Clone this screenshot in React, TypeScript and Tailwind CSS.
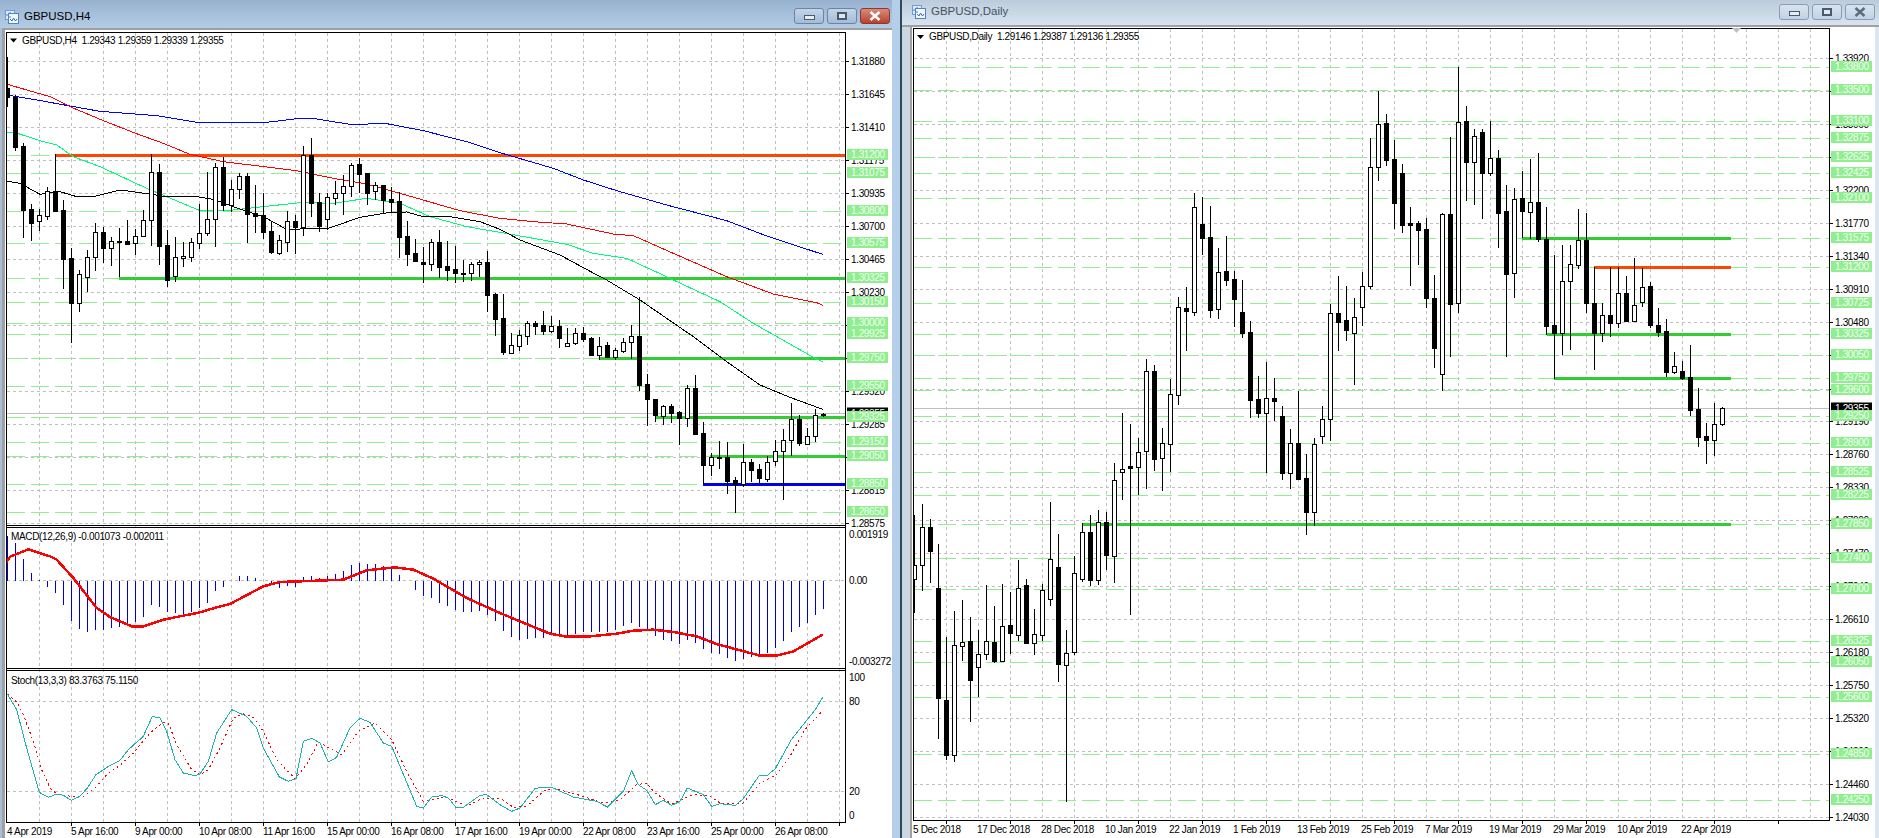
const FONT = '"Liberation Sans", Arial, sans-serif';

// chart data is read off the screenshot in thirds of a pixel
const pts = (s: string, dx = 0, dy = 0) =>
  s
    .split(' ')
    .map((p) => {
      const [x, y] = p.split(',').map(Number);
      return `${(x + dx) / 3},${(y + dy) / 3}`;
    })
    .join(' ');

type Candle = number[]; // hi, bodyTop, bodyBottom, lo, bull

const h4A: Candle[] = [
  [170, 265, 290, 320, 0], [285, 290, 440, 452, 0], [430, 438, 630, 714, 0], [612, 627, 668, 722, 0],
  [627, 646, 664, 693, 1], [560, 574, 647, 660, 1], [462, 574, 632, 632, 0], [600, 630, 776, 866, 0],
  [745, 775, 910, 1028, 0], [810, 822, 910, 935, 1], [750, 772, 830, 875, 1], [670, 697, 772, 812, 1],
  [680, 697, 743, 790, 0], [712, 724, 745, 797, 1], [684, 723, 725, 830, 0], [660, 724, 732, 735, 0],
  [688, 709, 730, 765, 1], [630, 661, 709, 709, 1], [462, 517, 661, 737, 1], [492, 517, 737, 795, 0],
  [690, 736, 840, 860, 0], [712, 770, 827, 846, 1], [727, 769, 775, 800, 1], [713, 727, 770, 785, 1],
  [612, 700, 730, 748, 1], [517, 658, 700, 708, 1], [488, 502, 658, 742, 1], [470, 502, 614, 632, 0],
  [540, 568, 614, 635, 1], [518, 529, 568, 598, 1], [518, 529, 643, 730, 0], [555, 640, 647, 700, 0],
  [578, 646, 695, 716, 0], [665, 694, 755, 763, 0], [705, 721, 758, 765, 1], [633, 664, 725, 755, 1],
  [645, 663, 680, 762, 0], [438, 466, 680, 708, 1], [414, 466, 608, 650, 0], [580, 607, 678, 695, 0],
  [578, 592, 656, 690, 1], [543, 580, 593, 614, 1], [526, 559, 580, 644, 1], [490, 496, 559, 590, 1],
  [475, 492, 521, 580, 0], [519, 520, 578, 614, 0], [547, 556, 574, 600, 1], [556, 556, 600, 640, 0],
  [560, 597, 605, 640, 0], [575, 603, 710, 775, 0], [663, 709, 761, 797, 0], [717, 759, 782, 786, 0],
  [740, 787, 793, 850, 0], [717, 727, 793, 812, 1], [690, 726, 800, 835, 0], [722, 799, 809, 842, 0],
  [738, 808, 820, 850, 0], [780, 820, 821, 845, 0], [787, 793, 820, 842, 1], [780, 787, 793, 830, 1],
  [752, 787, 884, 936, 0], [880, 882, 957, 1008, 0],
];

// second half of the H4 chart, y measured from y=280
const h4B: Candle[] = [
  [42, 114, 215, 225, 0], [160, 196, 218, 220, 1], [150, 166, 197, 213, 1], [124, 130, 167, 195, 1],
  [123, 130, 137, 165, 0], [94, 135, 153, 165, 0], [108, 139, 153, 160, 1], [120, 139, 173, 204, 0],
  [145, 188, 197, 200, 1], [145, 160, 188, 194, 1], [141, 160, 176, 185, 0], [172, 175, 225, 228, 0],
  [172, 199, 224, 240, 1], [187, 196, 230, 232, 0], [205, 211, 230, 240, 1], [175, 187, 212, 218, 1],
  [135, 169, 187, 237, 1], [52, 169, 315, 333, 0], [283, 313, 358, 437, 0], [358, 358, 406, 425, 0],
  [376, 379, 407, 435, 1], [372, 378, 398, 430, 0], [394, 397, 413, 495, 0], [316, 325, 413, 440, 1],
  [285, 325, 462, 465, 0], [426, 460, 554, 612, 0], [518, 532, 554, 587, 1], [483, 532, 533, 567, 0],
  [487, 532, 602, 642, 0], [592, 601, 613, 698, 0], [492, 547, 613, 622, 1], [538, 547, 570, 605, 0],
  [552, 568, 593, 608, 0], [527, 547, 596, 605, 1], [480, 514, 544, 558, 1], [447, 481, 514, 660, 1],
  [370, 418, 479, 527, 1], [406, 417, 488, 497, 0], [444, 469, 491, 493, 1], [388, 406, 469, 486, 1],
  [398, 401, 406, 410, 1],
].map(([a, b, c, d, e]) => [a + 840, b + 840, c + 840, d + 840, e]);

const daily: Candle[] = [
  [1545, 1696, 1736, 1839, 1], [1512, 1582, 1696, 1772, 1], [1558, 1582, 1652, 1749, 0], [1632, 1764, 2094, 2217, 0],
  [1911, 2101, 2264, 2279, 0], [1834, 1936, 2264, 2286, 1], [1801, 1927, 1937, 1982, 1], [1852, 1924, 2039, 2166, 0],
  [1890, 1961, 2002, 2092, 1], [1756, 1924, 1961, 1979, 1], [1819, 1927, 1982, 1989, 0], [1752, 1879, 1982, 1986, 1],
  [1776, 1876, 1898, 1962, 0], [1680, 1765, 1904, 1924, 1], [1737, 1756, 1929, 1932, 0], [1827, 1903, 1928, 1964, 1],
  [1752, 1771, 1904, 1924, 1], [1507, 1678, 1796, 1817, 1], [1602, 1702, 1991, 2046, 0], [1890, 1958, 1996, 2405, 1],
  [1668, 1720, 1955, 1966, 1], [1570, 1597, 1736, 1746, 1], [1545, 1597, 1739, 1759, 0], [1530, 1567, 1739, 1754, 1],
  [1537, 1567, 1665, 1710, 0], [1390, 1441, 1667, 1749, 1], [1240, 1408, 1415, 1500, 1], [1272, 1399, 1403, 1844, 0],
  [1314, 1357, 1400, 1485, 1], [1077, 1113, 1354, 1467, 1], [1095, 1113, 1377, 1413, 0], [1285, 1330, 1373, 1472, 1],
  [1137, 1183, 1331, 1417, 1], [892, 922, 1184, 1215, 1], [862, 925, 932, 1052, 0], [579, 622, 935, 948, 1],
  [592, 672, 714, 765, 0], [618, 712, 930, 953, 0], [745, 815, 928, 957, 1], [708, 813, 840, 857, 0],
  [813, 836, 897, 980, 0], [840, 937, 998, 1013, 0], [962, 997, 1199, 1253, 0], [1128, 1198, 1238, 1253, 0],
  [1087, 1195, 1238, 1418, 1], [1135, 1195, 1202, 1263, 0], [1218, 1248, 1418, 1440, 0], [1287, 1330, 1418, 1467, 1],
  [1173, 1330, 1437, 1440, 0], [1362, 1435, 1535, 1605, 0], [1315, 1333, 1535, 1578, 1], [1218, 1258, 1307, 1332, 1],
  [912, 940, 1258, 1323, 1], [828, 939, 965, 1052, 0], [858, 961, 990, 1023, 0], [894, 952, 998, 1155, 1],
  [815, 859, 920, 978, 1], [414, 502, 859, 868, 1], [273, 373, 502, 542, 1], [342, 370, 479, 497, 0],
  [420, 478, 608, 687, 0], [492, 520, 674, 698, 0], [621, 670, 674, 858, 0], [663, 670, 689, 795, 0],
  [655, 687, 893, 923, 0], [825, 895, 1043, 1103, 0], [640, 643, 1121, 1172, 1], [410, 643, 913, 1070, 0],
  [202, 365, 910, 938, 1], [318, 364, 485, 602, 0], [388, 409, 485, 614, 1], [388, 397, 518, 656, 0],
  [363, 475, 518, 527, 1], [450, 475, 638, 743, 0], [555, 634, 821, 1072, 0], [565, 598, 820, 893, 1],
  [513, 595, 632, 715, 0], [477, 607, 637, 716, 1], [460, 606, 716, 725, 0], [620, 716, 977, 1005, 0],
  [765, 975, 998, 1137, 0], [735, 842, 1000, 1065, 1], [735, 793, 842, 1050, 1], [627, 721, 794, 808, 1],
  [640, 721, 910, 940, 0], [800, 910, 998, 1110, 0], [910, 946, 1000, 1025, 1], [800, 945, 968, 1010, 0],
  [802, 880, 970, 983, 1], [828, 880, 962, 965, 0], [775, 916, 962, 965, 1], [805, 862, 905, 920, 1],
  [845, 858, 974, 983, 0], [924, 975, 995, 1012, 0], [958, 994, 1115, 1132, 0], [1057, 1099, 1115, 1122, 1],
  [1083, 1113, 1133, 1140, 0], [1035, 1131, 1229, 1247, 0], [1165, 1227, 1310, 1340, 0], [1270, 1308, 1319, 1392, 0],
  [1210, 1273, 1319, 1367, 1], [1220, 1225, 1273, 1278, 1],
];

const MA_BLUE = '22,285 100,298 210,318 300,334 470,347 590,367 800,367 900,355 950,357 1050,373 1160,371 1270,392 1400,425 1500,458 1660,505 1750,540 1850,572 2000,615 2180,662 2300,708 2468,763';
const MA_RED = '22,253 150,290 210,320 310,362 420,405 490,430 570,463 670,485 890,512 1000,535 1100,552 1200,580 1380,632 1500,655 1600,665 1700,672 1840,702 1900,707 2020,760 2180,830 2320,882 2450,908 2468,916';
const MA_GREEN = '22,398 40,396 120,422 170,435 220,470 300,500 440,565 500,590 600,632 700,630 790,620 900,608 1000,610 1100,595 1200,610 1290,650 1400,680 1500,697 1600,715 1700,733 1780,760 1880,775 2000,830 2020,840 2160,905 2260,970 2440,1072 2468,1085';
const MA_BLACK = '22,544 60,550 120,583 180,575 230,590 280,590 360,570 420,578 500,590 590,590 640,598 700,620 790,650 860,688 940,686 985,685 1080,652 1170,637 1220,636 1270,650 1350,650 1440,665 1500,688 1560,720 1680,765 1800,830 1820,840 1920,900 2080,1010 2180,1085 2280,1155 2370,1192 2468,1228';

const MACD_HIST = [
  -66, -44, 4, 45, 65, 87, 105, 140, 190, 213, 222, 215, 215, 210, 207, 200, 192, 177, 140, 147, 163, 165, 168, 163, 150, 135, 98, 87, 68, 55,
  55, 60, 68, 78, 90, 85, 87, 57, 55, 60, 55, 48, 40, 20, 15, 18, 18, 25, 25, 50, 70, 95, 115, 120, 135, 145, 155, 162, 162, 158, 170, 190,
  218, 237, 245, 242, 240, 240, 225, 235, 237, 228, 222, 222, 222, 222, 217, 205, 195, 207, 212, 235, 245, 250, 258, 245, 255, 272, 285, 288,
  300, 308, 303, 298, 295, 285, 270, 248, 222, 207, 195, 170, 152,
];
const MACD_SIG = '20,12 30,-4 85,-26 150,-5 170,5 220,60 290,150 330,177 395,205 430,205 490,185 540,175 600,163 650,148 690,138 790,85 840,72 900,70 1030,65 1100,37 1185,28 1240,35 1300,62 1400,120 1500,165 1560,190 1650,227 1700,236 1770,235 1850,227 1900,218 1960,215 2020,222 2090,235 2150,258 2280,293 2330,293 2380,280 2468,230';
const STOCH_K = '22,408 50,455 80,570 118,703 145,718 170,708 190,712 214,727 240,715 262,690 288,650 330,622 360,607 385,575 430,535 457,475 480,480 500,520 525,605 550,645 585,653 600,648 625,610 650,525 695,455 740,475 770,510 790,570 838,657 865,670 888,662 910,550 935,541 960,555 985,612 1010,598 1050,510 1080,481 1110,493 1150,555 1175,565 1250,745 1270,750 1295,717 1325,713 1345,720 1368,748 1390,748 1440,712 1460,710 1500,740 1535,760 1560,750 1605,692 1625,688 1655,688 1720,717 1790,730 1822,747 1870,700 1895,638 1915,680 1940,697 1966,740 1990,727 2015,742 2040,730 2062,690 2110,710 2135,745 2160,737 2206,742 2230,722 2278,652 2302,652 2326,632 2374,545 2446,455 2468,418';
const STOCH_D = '22,408 50,432 70,470 100,550 125,635 150,690 170,708 220,716 250,715 285,690 320,650 360,622 400,585 450,525 490,493 505,495 530,560 575,635 600,650 625,635 660,570 700,480 730,467 760,478 790,520 830,605 885,662 920,620 955,552 1025,590 1075,520 1125,495 1175,545 1220,640 1270,730 1340,717 1400,745 1450,720 1500,720 1540,748 1580,745 1630,700 1660,690 1750,715 1810,735 1860,725 1910,680 1940,675 1965,705 2015,738 2080,710 2130,715 2165,738 2230,735 2280,675 2330,650 2370,595 2415,515 2468,458';

type Level = [string, number];

const h4Grid: Level[] = [
  ['1.31880', 61], ['1.31645', 94], ['1.31410', 127], ['1.31175', 160], ['1.30935', 193], ['1.30700', 226], ['1.30465', 259],
  ['1.30230', 292], ['1.29995', 325], ['1.29760', 358], ['1.29520', 391], ['1.29285', 424], ['1.29050', 457], ['1.28815', 490], ['1.28575', 523],
];
const h4Levels: Level[] = [
  ['1.31200', 155.5], ['1.31075', 173.5], ['1.30800', 211.5], ['1.30575', 243.5], ['1.30325', 278.5], ['1.30150', 302.5],
  ['1.30000', 323.5], ['1.29925', 334.5], ['1.29750', 358.5], ['1.29550', 386.5], ['1.29325', 417.5], ['1.29150', 442.5],
  ['1.29050', 456.5], ['1.28850', 484.5], ['1.28650', 512.5],
];
const h4Solid: [number, number, string][] = [
  [55, 155.5, '#ff4500'], [119, 278.5, '#32cd32'], [600, 358.5, '#32cd32'], [655, 417.5, '#32cd32'], [710, 456.5, '#32cd32'], [703, 484.5, '#0000e6'],
];
const h4Dates: [string, number][] = [
  ['4 Apr 2019', 7], ['5 Apr 16:00', 71], ['9 Apr 00:00', 135], ['10 Apr 08:00', 199], ['11 Apr 16:00', 263], ['15 Apr 00:00', 327],
  ['16 Apr 08:00', 391], ['17 Apr 16:00', 455], ['19 Apr 00:00', 519], ['22 Apr 08:00', 583], ['23 Apr 16:00', 647], ['25 Apr 00:00', 711], ['26 Apr 08:00', 775],
];

const dayGrid: Level[] = [
  ['1.33920', 58.5], ['1.33490', 91.5], ['1.33060', 124.5], ['1.32630', 157.5], ['1.32200', 190.5], ['1.31770', 223.5], ['1.31340', 256.5],
  ['1.30910', 289.5], ['1.30480', 322.5], ['1.30050', 355.5], ['1.29620', 389.5], ['1.29190', 421.5], ['1.28760', 454.5], ['1.28330', 487.5],
  ['1.27900', 520.5], ['1.27470', 553.5], ['1.27040', 586.5], ['1.26610', 619.5], ['1.26180', 652.5], ['1.25750', 685.5], ['1.25320', 718.5],
  ['1.24890', 751.5], ['1.24460', 784.5], ['1.24030', 817.5],
];
const dayLevels: Level[] = [
  ['1.33800', 67.5], ['1.33500', 90.5], ['1.33100', 121.5], ['1.32875', 138.5], ['1.32625', 157.5], ['1.32425', 173.5], ['1.32100', 198.5],
  ['1.31575', 238.5], ['1.31200', 267.5], ['1.30725', 303.5], ['1.30325', 334.5], ['1.30050', 355.5], ['1.29750', 378.5], ['1.29600', 390.5],
  ['1.29250', 416.5], ['1.28900', 443.5], ['1.28525', 472.5], ['1.28225', 495.5], ['1.27850', 524.5], ['1.27400', 558.5], ['1.27000', 589.5],
  ['1.26325', 641.5], ['1.26050', 662.5], ['1.25600', 697.5], ['1.24850', 754.5], ['1.24250', 800.5],
];
const daySolid: [number, number, string][] = [
  [1522, 238.5, '#32cd32'], [1594, 267.5, '#ff4500'], [1547, 334.5, '#32cd32'], [1554, 378.5, '#32cd32'], [1082, 524.5, '#32cd32'],
];
const dayDates: [string, number][] = [
  ['5 Dec 2018', 913], ['17 Dec 2018', 977], ['28 Dec 2018', 1041], ['10 Jan 2019', 1105], ['22 Jan 2019', 1169], ['1 Feb 2019', 1233],
  ['13 Feb 2019', 1297], ['25 Feb 2019', 1361], ['7 Mar 2019', 1425], ['19 Mar 2019', 1489], ['29 Mar 2019', 1553], ['10 Apr 2019', 1617], ['22 Apr 2019', 1681],
];

const range = (from: number, step: number, to: number) => {
  const out: number[] = [];
  for (let v = from; v <= to; v += step) out.push(v);
  return out;
};

function Candles({ data, x0 }: { data: Candle[]; x0: number }) {
  return (
    <g shapeRendering="crispEdges">
      {data.map(([hi, top, bot, lo, bull], i) => {
        const c = x0 + 8 * i;
        const t = Math.round(top / 3);
        const b = Math.max(Math.round(bot / 3), t + 1);
        return (
          <g key={i}>
            <line x1={c} x2={c} y1={Math.round(hi / 3)} y2={Math.round(lo / 3)} stroke="#000" />
            {bull ? (
              <rect x={c - 2} y={t + 0.5} width={4} height={b - t} fill="#fff" stroke="#000" />
            ) : (
              <rect x={c - 2.5} y={t} width={5} height={b - t + 1} fill="#000" />
            )}
          </g>
        );
      })}
    </g>
  );
}

function PriceLabels({ grid, levels, x, bid }: { grid: Level[]; levels: Level[]; x: number; bid: Level }) {
  return (
    <g fontSize="10">
      {grid.map(([t, y]) => (
        <g key={t}>
          <line x1={x - 5} x2={x - 2} y1={y} y2={y} stroke="#000" shapeRendering="crispEdges" />
          <text x={x} y={y + 3.5} fill="#000">{t}</text>
        </g>
      ))}
      <rect x={x - 4} y={bid[1] - 6} width={41} height={11} fill="#000" />
      <text x={x} y={bid[1] + 3} fill="#fff">{bid[0]}</text>
      {levels.map(([t, y]) => (
        <g key={t}>
          <rect x={x - 4} y={y - 6.5} width={41} height={11} fill="#90ee90" />
          <text x={x} y={y + 2.5} fill="#f2fff2">{t}</text>
        </g>
      ))}
    </g>
  );
}

function Levels({ levels, x1, x2 }: { levels: Level[]; x1: number; x2: number }) {
  return (
    <g shapeRendering="crispEdges">
      {levels.map(([t, y]) => (
        <line key={t} x1={x1} x2={x2} y1={y} y2={y} stroke="#90ee90" strokeDasharray="18 6" />
      ))}
    </g>
  );
}

function H4Chart() {
  const vertical = range(39.5, 32, 841);
  return (
    <svg viewBox="5 30 887 808" className="block h-[808px] w-[887px] bg-white tracking-[-0.35px]" fontFamily={FONT} fontSize="10">
      <defs>
        <clipPath id="h4-plot">
          <rect x="7" y="33" width="838" height="789" />
        </clipPath>
      </defs>
      <g stroke="#c0c0c0" strokeDasharray="3 3" shapeRendering="crispEdges" fill="none">
        {vertical.map((x) => (
          <line key={x} x1={x} x2={x} y1={33} y2={822} />
        ))}
        {h4Grid.map(([t, y]) => (
          <line key={t} x1={7} x2={845} y1={y} y2={y} />
        ))}
        <line x1={7} x2={845} y1={580.5} y2={580.5} />
        <line x1={7} x2={845} y1={701.5} y2={701.5} />
        <line x1={7} x2={845} y1={791.5} y2={791.5} />
      </g>
      <Levels levels={h4Levels} x1={7} x2={845} />
      <line x1={7} x2={845} y1={413.5} y2={413.5} stroke="#c0c0c0" shapeRendering="crispEdges" />
      <g shapeRendering="crispEdges">
        {h4Solid.map(([x, y, c]) => (
          <line key={y} x1={x} x2={845} y1={y} y2={y} stroke={c} strokeWidth={3} />
        ))}
      </g>
      <g fill="none" strokeWidth={1} shapeRendering="crispEdges">
        <polyline points={pts(MA_BLUE)} stroke="#0000ff" />
        <polyline points={pts(MA_RED)} stroke="#ff0000" />
        <polyline points={pts(MA_GREEN)} stroke="#00fa7d" />
        <polyline points={pts(MA_BLACK)} stroke="#000" />
      </g>
      <g clipPath="url(#h4-plot)">
        <Candles data={[...h4A, ...h4B]} x0={7.5} />
      </g>

      {/* MACD pane */}
      <g shapeRendering="crispEdges">
        {MACD_HIST.map((v, i) => (
          <line key={i} x1={7.5 + 8 * i} x2={7.5 + 8 * i} y1={580.5} y2={558 + v / 3} stroke="#0000dd" />
        ))}
      </g>
      <polyline points={pts(MACD_SIG, 0, 1674)} fill="none" stroke="#ff0000" strokeWidth={2.5} shapeRendering="crispEdges" />

      {/* Stochastic pane */}
      <polyline points={pts(STOCH_D, 0, 1674)} fill="none" stroke="#ff0000" strokeDasharray="2 3" shapeRendering="crispEdges" />
      <polyline points={pts(STOCH_K, 0, 1674)} fill="none" stroke="#20b2aa" shapeRendering="crispEdges" />

      {/* pane frames */}
      <g stroke="#000" shapeRendering="crispEdges">
        <line x1={6.5} x2={845.5} y1={32.5} y2={32.5} />
        <line x1={6.5} x2={6.5} y1={32} y2={822} />
        <line x1={845.5} x2={845.5} y1={32} y2={822} />
        <line x1={6} x2={846} y1={525.5} y2={525.5} />
        <line x1={6} x2={846} y1={527.5} y2={527.5} />
        <line x1={6} x2={846} y1={668.5} y2={668.5} />
        <line x1={6} x2={846} y1={670.5} y2={670.5} />
        <line x1={6} x2={846} y1={822.5} y2={822.5} />
      </g>

      <path d="M10 38.5h7l-3.5 4z" fill="#000" />
      <text x={22} y={44} fill="#000">{'GBPUSD,H4\u00a0 1.29343 1.29359 1.29339 1.29355'}</text>
      <text x={11} y={540} fill="#000">MACD(12,26,9) -0.001073 -0.002011</text>
      <text x={11} y={684} fill="#000">Stoch(13,3,3) 83.3763 75.1150</text>

      <PriceLabels grid={h4Grid} levels={h4Levels} x={851} bid={['1.29355', 413.5]} />
      <g fill="#000">
        <text x={849} y={538}>0.001919</text>
        <text x={849} y={584}>0.00</text>
        <text x={849} y={665}>-0.003272</text>
        <text x={849} y={681}>100</text>
        <text x={849} y={705}>80</text>
        <text x={849} y={795}>20</text>
        <text x={849} y={819}>0</text>
      </g>
      {vertical.filter((_, i) => i % 2 === 1).map((x) => (
        <line key={x} x1={x} x2={x} y1={823} y2={826} stroke="#000" shapeRendering="crispEdges" />
      ))}
      {h4Dates.map(([t, x]) => (
        <text key={t} x={x} y={835} fill="#000">{t}</text>
      ))}
    </svg>
  );
}

function DailyChart() {
  const vertical = range(946.5, 32, 1811);
  return (
    <svg viewBox="912 27 963 811" className="block h-[811px] w-[963px] bg-white tracking-[-0.35px]" fontFamily={FONT} fontSize="10">
      <defs>
        <clipPath id="day-plot">
          <rect x="914" y="29" width="915" height="791" />
        </clipPath>
      </defs>
      <g stroke="#c0c0c0" strokeDasharray="3 3" shapeRendering="crispEdges" fill="none">
        {vertical.map((x) => (
          <line key={x} x1={x} x2={x} y1={29} y2={820} />
        ))}
        {dayGrid.map(([t, y]) => (
          <line key={t} x1={914} x2={1829} y1={y} y2={y} />
        ))}
      </g>
      <Levels levels={dayLevels} x1={914} x2={1829} />
      <line x1={914} x2={1829} y1={408.5} y2={408.5} stroke="#c0c0c0" shapeRendering="crispEdges" />
      <g shapeRendering="crispEdges">
        {daySolid.map(([x, y, c]) => (
          <line key={y} x1={x} x2={1731} y1={y} y2={y} stroke={c} strokeWidth={3} />
        ))}
      </g>
      <g clipPath="url(#day-plot)">
        <Candles data={daily} x0={914.5} />
      </g>

      <g stroke="#000" shapeRendering="crispEdges">
        <line x1={913} x2={1829} y1={28.5} y2={28.5} />
        <line x1={913.5} x2={913.5} y1={28} y2={820} />
        <line x1={1829.5} x2={1829.5} y1={28} y2={821} />
        <line x1={913} x2={1830} y1={820.5} y2={820.5} />
      </g>
      <path d="M1732 28h9l-4.500 5z" fill="#c0c0c0" />
      <path d="M917 35h7l-3.500 4z" fill="#000" />
      <text x={929} y={40} fill="#000">{'GBPUSD,Daily\u00a0 1.29146 1.29387 1.29136 1.29355'}</text>

      <PriceLabels grid={dayGrid} levels={dayLevels} x={1835} bid={['1.29355', 408.5]} />
      {vertical.filter((_, i) => i % 2 === 0).map((x) => (
        <line key={x} x1={x} x2={x} y1={821} y2={824} stroke="#000" shapeRendering="crispEdges" />
      ))}
      {dayDates.map(([t, x]) => (
        <text key={t} x={x} y={833} fill="#000">{t}</text>
      ))}
    </svg>
  );
}

function ChartIcon() {
  return (
    <svg width="14" height="14" viewBox="0 0 14 14" className="shrink-0">
      <rect x="0.500" y="0.500" width="9" height="9" fill="#dfeafa" stroke="#6f9bd6" />
      <rect x="3.500" y="3.500" width="10" height="10" fill="#f4f8fe" stroke="#4f82c8" />
      <path d="M2 4v2M5 2v2M5 6v2" stroke="#4f82c8" />
      <path d="M5 9l2 2 1.500-3 2 3 1.500-2" fill="none" stroke="#3a6fb8" />
    </svg>
  );
}

function WinButton({ kind, active }: { kind: 'min' | 'max' | 'close'; active: boolean }) {
  const tone =
    kind === 'close' && active
      ? 'border-[#8a3a30] bg-gradient-to-b from-[#d98a7c] to-[#b8402c]'
      : active
        ? 'border-[#6b84a3] bg-gradient-to-b from-[#c4d5e8] to-[#a3bcd8]'
        : 'border-[#8a9cb2] bg-gradient-to-b from-[#d8e3ee] to-[#c2d2e3]';
  return (
    <div className={`flex h-[16px] w-[30px] items-center justify-center rounded-[3px] border ${tone}`}>
      {kind === 'min' && <div className="mt-[3px] h-[5px] w-[11px] border border-[#4a5a6c] bg-[#e6edf5]" />}
      {kind === 'max' && <div className="h-[8px] w-[10px] border-2 border-[#4a5a6c] bg-[#dfe8f2]" />}
      {kind === 'close' && (
        <svg width="12" height="10" viewBox="0 0 12 10">
          <path d="M1.500 1l9 8M10.500 1l-9 8" stroke={active ? '#fff' : '#5c6b7a'} strokeWidth="2.500" />
        </svg>
      )}
    </div>
  );
}

export default function App() {
  return (
    <div className="flex h-[838px] w-[1879px] overflow-hidden bg-white" style={{ fontFamily: FONT }}>
      {/* H4 window (active) */}
      <div className="flex h-full w-[892px] flex-col border-l-2 border-[#a9bfd8]">
        <div className="-ml-[2px] flex h-[28px] shrink-0 items-start bg-gradient-to-b from-[#98b1cf] to-[#b4cde6] pl-[5px] pr-[2px]">
          <div className="mt-[10px] flex items-center gap-[5px]">
            <ChartIcon />
            <span className="text-[11.500px] leading-none text-black">GBPUSD,H4</span>
          </div>
          <div className="ml-auto mt-[8px] flex gap-[3px]">
            <WinButton kind="min" active />
            <WinButton kind="max" active />
            <WinButton kind="close" active />
          </div>
        </div>
        <div className="h-[2px] shrink-0 bg-[#a0a0a0]" />
        <div className="border-l-[3px] border-[#a0a0a0]">
          <H4Chart />
        </div>
      </div>

      {/* gap between the two MDI children */}
      <div className="h-full w-[8px] shrink-0 bg-[#b5cee9]" />
      <div className="h-full w-[2px] shrink-0 bg-[#2c4a58]" />

      {/* Daily window (inactive) */}
      <div className="flex h-full w-[977px] flex-col">
        <div className="flex h-[25px] shrink-0 items-start bg-gradient-to-b from-[#bccbdb] to-[#d7e4f0] pl-[10px] pr-[4px]">
          <div className="mt-[5px] flex items-center gap-[5px]">
            <ChartIcon />
            <span className="text-[11.500px] leading-none text-[#46525f]">GBPUSD,Daily</span>
          </div>
          <div className="ml-auto mt-[4px] flex gap-[3px]">
            <WinButton kind="min" active={false} />
            <WinButton kind="max" active={false} />
            <WinButton kind="close" active={false} />
          </div>
        </div>
        <div className="h-[2px] shrink-0 bg-[#a0a0a0]" />
        <div className="flex">
          <div className="w-[8px] shrink-0 bg-[#cbd8e4]" />
          <div className="w-[2px] shrink-0 bg-[#a0a0a0]" />
          <DailyChart />
          <div className="w-[4px] shrink-0 bg-[#dbe6f1]" />
        </div>
      </div>
    </div>
  );
}
